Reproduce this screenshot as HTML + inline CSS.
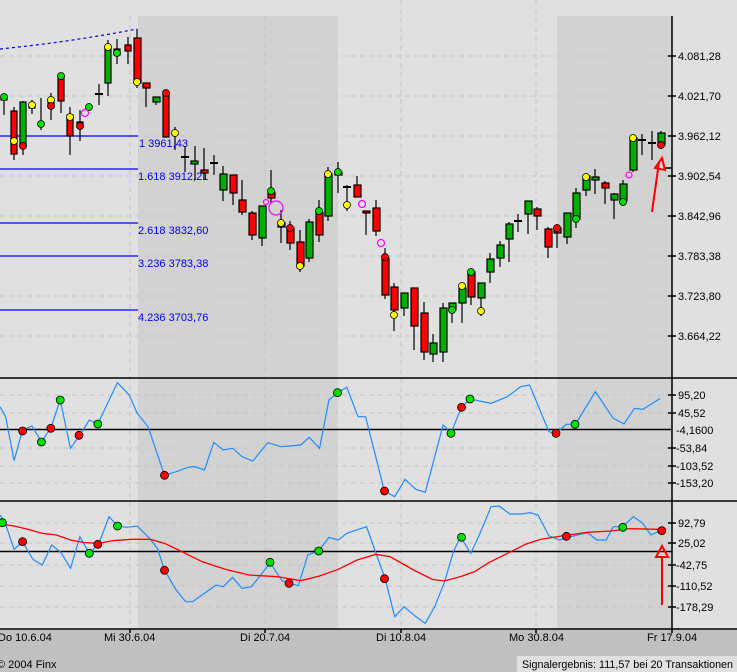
<!DOCTYPE html>
<html><head><meta charset="utf-8"><style>
html,body{margin:0;padding:0;background:#c0c0c0;}
svg{display:block;font-family:"Liberation Sans",sans-serif;}
</style></head><body>
<svg width="737" height="672" viewBox="0 0 737 672" xmlns="http://www.w3.org/2000/svg">
<rect x="0" y="0" width="737" height="629" fill="#e0e0e0"/>
<rect x="0" y="629" width="737" height="43" fill="#c0c0c0"/>
<g fill="#d2d2d2">
<rect x="138" y="16" width="200" height="613"/>
<rect x="557" y="16" width="115" height="613"/>
</g>
<g stroke="#c4c4c4" stroke-dasharray="5,4" stroke-width="1">
<line x1="0" y1="56" x2="672" y2="56"/><line x1="0" y1="96" x2="672" y2="96"/><line x1="0" y1="136" x2="672" y2="136"/><line x1="0" y1="176" x2="672" y2="176"/><line x1="0" y1="216" x2="672" y2="216"/><line x1="0" y1="256" x2="672" y2="256"/><line x1="0" y1="296" x2="672" y2="296"/><line x1="0" y1="336" x2="672" y2="336"/>
<line x1="0" y1="395" x2="672" y2="395"/><line x1="0" y1="413" x2="672" y2="413"/><line x1="0" y1="448" x2="672" y2="448"/><line x1="0" y1="466" x2="672" y2="466"/><line x1="0" y1="483" x2="672" y2="483"/>
<line x1="0" y1="523" x2="672" y2="523"/><line x1="0" y1="543" x2="672" y2="543"/><line x1="0" y1="565" x2="672" y2="565"/><line x1="0" y1="586" x2="672" y2="586"/><line x1="0" y1="607" x2="672" y2="607"/>
<line x1="130" y1="16" x2="130" y2="629"/><line x1="265" y1="16" x2="265" y2="629"/><line x1="401" y1="0" x2="401" y2="629"/><line x1="536" y1="0" x2="536" y2="629"/>
</g>
<g stroke="#000" stroke-width="1.5">
<line x1="0" y1="378" x2="737" y2="378"/><line x1="0" y1="501" x2="737" y2="501"/><line x1="0" y1="629" x2="737" y2="629"/>
<line x1="672" y1="16" x2="672" y2="633"/>
<line x1="0" y1="429.5" x2="672" y2="429.5"/><line x1="0" y1="551.5" x2="672" y2="551.5"/>
</g>
<g stroke="#000" stroke-width="1.5">
<line x1="668" y1="56" x2="676" y2="56"/><line x1="668" y1="96" x2="676" y2="96"/><line x1="668" y1="136" x2="676" y2="136"/><line x1="668" y1="176" x2="676" y2="176"/><line x1="665" y1="168" x2="672" y2="168"/><line x1="668" y1="216" x2="676" y2="216"/><line x1="668" y1="256" x2="676" y2="256"/><line x1="668" y1="296" x2="676" y2="296"/><line x1="668" y1="336" x2="676" y2="336"/>
<line x1="668" y1="395" x2="676" y2="395"/><line x1="668" y1="413" x2="676" y2="413"/><line x1="668" y1="448" x2="676" y2="448"/><line x1="668" y1="466" x2="676" y2="466"/><line x1="668" y1="483" x2="676" y2="483"/>
<line x1="668" y1="523" x2="676" y2="523"/><line x1="668" y1="543" x2="676" y2="543"/><line x1="668" y1="565" x2="676" y2="565"/><line x1="668" y1="586" x2="676" y2="586"/><line x1="668" y1="607" x2="676" y2="607"/>
<line x1="130" y1="629" x2="130" y2="633"/><line x1="265" y1="629" x2="265" y2="633"/><line x1="401" y1="629" x2="401" y2="633"/><line x1="536" y1="629" x2="536" y2="633"/>
</g>
<g font-size="11" fill="#000">
<text x="678" y="60">4.081,28</text><text x="678" y="100">4.021,70</text><text x="678" y="140">3.962,12</text><text x="678" y="180">3.902,54</text><text x="678" y="220">3.842,96</text><text x="678" y="260">3.783,38</text><text x="678" y="300">3.723,80</text><text x="678" y="340">3.664,22</text>
<text x="678" y="399">95,20</text><text x="678" y="417">45,52</text><text x="676" y="434">-4,1600</text><text x="676" y="452">-53,84</text><text x="676" y="470">-103,52</text><text x="676" y="487">-153,20</text>
<text x="678" y="527">92,79</text><text x="678" y="547">25,02</text><text x="676" y="569">-42,75</text><text x="676" y="590">-110,52</text><text x="676" y="611">-178,29</text>
<text x="-2" y="641">Do 10.6.04</text><text x="104" y="641">Mi 30.6.04</text><text x="240" y="641">Di 20.7.04</text><text x="376" y="641">Di 10.8.04</text><text x="509" y="641">Mo 30.8.04</text><text x="647" y="641">Fr 17.9.04</text>
<text x="-3" y="668">© 2004 Finx</text>
</g>
<rect x="517" y="656" width="220" height="16" fill="#e0e0e0"/>
<text x="522" y="668" font-size="11" fill="#000" textLength="211" lengthAdjust="spacingAndGlyphs">Signalergebnis: 111,57 bei 20 Transaktionen</text>
<g stroke="#0000ff" stroke-width="1.2">
<line x1="0" y1="136" x2="138" y2="136"/><line x1="0" y1="169" x2="138" y2="169"/><line x1="0" y1="223" x2="138" y2="223"/><line x1="0" y1="256" x2="138" y2="256"/><line x1="0" y1="310" x2="138" y2="310"/>
</g>
<path d="M0,49 Q70,42 137,29" stroke="#0000ff" stroke-dasharray="3,3" fill="none" stroke-width="1.2"/>
<g font-size="11" fill="#0000ff">
<text x="139" y="147">1  3961,43</text><text x="138" y="180">1.618  3912,21</text><text x="138" y="234">2.618  3832,60</text><text x="138" y="267">3.236  3783,38</text><text x="138" y="321">4.236  3703,76</text>
</g>
<g stroke="#000" stroke-width="1.2">
<line x1="4" y1="97" x2="4" y2="115"/><rect x="1" y="97" width="6" height="3" fill="#f00"/>
<line x1="14" y1="107" x2="14" y2="160"/><rect x="11" y="111" width="6" height="43" fill="#f00"/>
<line x1="23" y1="101" x2="23" y2="155"/><rect x="20" y="102" width="6" height="44" fill="#00b000"/>
<line x1="32" y1="100" x2="32" y2="114"/><rect x="29" y="105" width="6" height="3" fill="#f00"/>
<line x1="41" y1="98" x2="41" y2="130"/>
<line x1="51" y1="93" x2="51" y2="120"/><rect x="48" y="101" width="6" height="4" fill="#f00"/>
<line x1="61" y1="74" x2="61" y2="113"/><rect x="58" y="77" width="6" height="24" fill="#f00"/>
<line x1="70" y1="107" x2="70" y2="155"/><rect x="67" y="115" width="6" height="21" fill="#f00"/>
<line x1="80" y1="110" x2="80" y2="141"/><rect x="77" y="122" width="6" height="5" fill="#00b000"/>
<line x1="89" y1="104" x2="89" y2="110"/>
<line x1="99" y1="84" x2="99" y2="105"/><line x1="95" y1="94" x2="103" y2="94" stroke-width="2"/>
<line x1="108" y1="40" x2="108" y2="96"/><rect x="105" y="46" width="6" height="37" fill="#00b000"/>
<line x1="117" y1="39" x2="117" y2="64"/><rect x="114" y="49" width="6" height="6" fill="#00b000"/>
<line x1="128" y1="37" x2="128" y2="64"/><rect x="125" y="45" width="6" height="6" fill="#f00"/>
<line x1="137" y1="29" x2="137" y2="88"/><rect x="134" y="38" width="7" height="45" fill="#f00"/>
<line x1="146" y1="83" x2="146" y2="107"/><rect x="143" y="83" width="7" height="5" fill="#f00"/>
<line x1="156" y1="97" x2="156" y2="105"/><rect x="153" y="97" width="7" height="5" fill="#00b000"/>
<line x1="166" y1="90" x2="166" y2="137"/><rect x="163" y="95" width="6" height="42" fill="#f00"/>
<line x1="175" y1="127" x2="175" y2="150"/>
<line x1="185" y1="146" x2="185" y2="172"/><line x1="181" y1="157" x2="189" y2="157" stroke-width="2"/>
<line x1="195" y1="146" x2="195" y2="180"/><rect x="191" y="161" width="7" height="3" fill="#00b000"/>
<line x1="204" y1="148" x2="204" y2="180"/><rect x="201" y="170" width="7" height="3" fill="#f00"/>
<line x1="214" y1="155" x2="214" y2="175"/><line x1="210" y1="163" x2="218" y2="163" stroke-width="2"/>
<line x1="223" y1="166" x2="223" y2="201"/><rect x="220" y="174" width="7" height="16" fill="#00b000"/>
<line x1="233" y1="175" x2="233" y2="205"/><rect x="230" y="175" width="7" height="18" fill="#f00"/>
<line x1="242" y1="180" x2="242" y2="215"/><rect x="239" y="200" width="7" height="12" fill="#f00"/>
<line x1="252" y1="211" x2="252" y2="240"/><rect x="249" y="213" width="7" height="22" fill="#f00"/>
<line x1="262" y1="206" x2="262" y2="246"/><rect x="259" y="206" width="7" height="32" fill="#00b000"/>
<line x1="271" y1="170" x2="271" y2="203"/><rect x="268" y="192" width="7" height="6" fill="#f00"/>
<line x1="281" y1="210" x2="281" y2="243"/><rect x="278" y="223" width="7" height="4" fill="#f00"/>
<line x1="290" y1="221" x2="290" y2="250"/><rect x="287" y="228" width="7" height="15" fill="#f00"/>
<line x1="300" y1="230" x2="300" y2="272"/><rect x="297" y="242" width="7" height="24" fill="#f00"/>
<line x1="309" y1="219" x2="309" y2="262"/><rect x="306" y="222" width="7" height="36" fill="#00b000"/>
<line x1="319" y1="200" x2="319" y2="242"/><rect x="316" y="212" width="7" height="23" fill="#f00"/>
<line x1="328" y1="167" x2="328" y2="221"/><rect x="325" y="174" width="7" height="42" fill="#00b000"/>
<line x1="338" y1="162" x2="338" y2="193"/><rect x="335" y="172" width="7" height="3" fill="#00b000"/>
<line x1="347" y1="185" x2="347" y2="211"/><line x1="343" y1="187" x2="351" y2="187" stroke-width="2"/>
<line x1="357" y1="176" x2="357" y2="197"/><rect x="354" y="185" width="7" height="12" fill="#f00"/>
<line x1="366" y1="211" x2="366" y2="235"/><rect x="363" y="211" width="7" height="2" fill="#f00"/>
<line x1="376" y1="200" x2="376" y2="236"/><rect x="373" y="208" width="7" height="23" fill="#f00"/>
<line x1="385" y1="248" x2="385" y2="299"/><rect x="382" y="258" width="7" height="37" fill="#f00"/>
<line x1="394" y1="283" x2="394" y2="331"/><rect x="391" y="287" width="7" height="23" fill="#f00"/>
<line x1="404" y1="293" x2="404" y2="316"/><rect x="401" y="293" width="7" height="15" fill="#00b000"/>
<line x1="414" y1="288" x2="414" y2="350"/><rect x="411" y="288" width="7" height="38" fill="#f00"/>
<line x1="424" y1="302" x2="424" y2="360"/><rect x="421" y="313" width="7" height="39" fill="#f00"/>
<line x1="433" y1="334" x2="433" y2="362"/><rect x="430" y="343" width="7" height="11" fill="#00b000"/>
<line x1="443" y1="303" x2="443" y2="362"/><rect x="440" y="308" width="7" height="44" fill="#00b000"/>
<line x1="452" y1="303" x2="452" y2="323"/><rect x="449" y="303" width="7" height="7" fill="#00b000"/>
<line x1="462" y1="285" x2="462" y2="323"/><rect x="459" y="288" width="7" height="15" fill="#00b000"/>
<line x1="471" y1="272" x2="471" y2="305"/><rect x="468" y="272" width="7" height="25" fill="#f00"/>
<line x1="481" y1="283" x2="481" y2="316"/><rect x="478" y="283" width="7" height="15" fill="#00b000"/>
<line x1="490" y1="253" x2="490" y2="283"/><rect x="487" y="259" width="7" height="13" fill="#00b000"/>
<line x1="500" y1="241" x2="500" y2="267"/><rect x="497" y="245" width="7" height="13" fill="#00b000"/>
<line x1="509" y1="222" x2="509" y2="262"/><rect x="506" y="224" width="7" height="15" fill="#00b000"/>
<line x1="518" y1="214" x2="518" y2="232"/><line x1="514" y1="221" x2="522" y2="221" stroke-width="2"/>
<line x1="528" y1="201" x2="528" y2="234"/><rect x="525" y="201" width="7" height="13" fill="#00b000"/>
<line x1="537" y1="207" x2="537" y2="230"/><rect x="534" y="209" width="7" height="7" fill="#f00"/>
<line x1="548" y1="227" x2="548" y2="258"/><rect x="545" y="229" width="7" height="18" fill="#f00"/>
<line x1="557" y1="224" x2="557" y2="248"/><rect x="554" y="228" width="7" height="5" fill="#f00"/>
<line x1="567" y1="213" x2="567" y2="244"/><rect x="564" y="213" width="7" height="24" fill="#00b000"/>
<line x1="576" y1="188" x2="576" y2="228"/><rect x="573" y="193" width="7" height="26" fill="#00b000"/>
<line x1="586" y1="176" x2="586" y2="196"/><rect x="583" y="176" width="7" height="14" fill="#00b000"/>
<line x1="595" y1="169" x2="595" y2="194"/><rect x="592" y="177" width="7" height="3" fill="#00b000"/>
<line x1="605" y1="181" x2="605" y2="204"/><rect x="602" y="183" width="7" height="5" fill="#f00"/>
<line x1="614" y1="193" x2="614" y2="219"/><rect x="611" y="194" width="7" height="6" fill="#00b000"/>
<line x1="623" y1="180" x2="623" y2="202"/><rect x="620" y="184" width="7" height="17" fill="#00b000"/>
<line x1="633" y1="136" x2="633" y2="172"/><rect x="630" y="138" width="7" height="32" fill="#00b000"/>
<line x1="642" y1="134" x2="642" y2="155"/><line x1="638" y1="140" x2="646" y2="140" stroke-width="2"/>
<line x1="652" y1="131" x2="652" y2="160"/><line x1="648" y1="143" x2="656" y2="143" stroke-width="2"/>
<line x1="661" y1="131" x2="661" y2="149"/><rect x="658" y="133" width="7" height="12" fill="#00b000"/>
</g>
<g stroke="#000" stroke-width="0.8">
<circle cx="4" cy="97" r="3.5" fill="#00e000"/><circle cx="14" cy="141" r="3.5" fill="#ff0"/><circle cx="23" cy="146" r="3.5" fill="#f00"/><circle cx="32" cy="105" r="3.5" fill="#ff0"/><circle cx="41" cy="124" r="3.5" fill="#00e000"/><circle cx="51" cy="100" r="3.5" fill="#ff0"/><circle cx="51" cy="106" r="3.5" fill="#f00"/><circle cx="61" cy="76" r="3.5" fill="#00e000"/><circle cx="70" cy="117" r="3.5" fill="#ff0"/><circle cx="80" cy="126" r="3.5" fill="#f00"/><circle cx="89" cy="107" r="3.5" fill="#00e000"/><circle cx="108" cy="47" r="3.5" fill="#ff0"/><circle cx="117" cy="53" r="3.5" fill="#00e000"/><circle cx="137" cy="82" r="3.5" fill="#ff0"/><circle cx="166" cy="93" r="3.5" fill="#f00"/><circle cx="175" cy="133" r="3.5" fill="#ff0"/><circle cx="271" cy="191" r="3.5" fill="#00e000"/><circle cx="281" cy="223" r="3.5" fill="#ff0"/><circle cx="290" cy="228" r="3.5" fill="#f00"/><circle cx="300" cy="266" r="3.5" fill="#ff0"/><circle cx="319" cy="211" r="3.5" fill="#00e000"/><circle cx="328" cy="174" r="3.5" fill="#ff0"/><circle cx="338" cy="172" r="3.5" fill="#00e000"/><circle cx="347" cy="205" r="3.5" fill="#ff0"/><circle cx="385" cy="257" r="3.5" fill="#f00"/><circle cx="394" cy="315" r="3.5" fill="#ff0"/><circle cx="452" cy="310" r="3.5" fill="#00e000"/><circle cx="462" cy="286" r="3.5" fill="#ff0"/><circle cx="471" cy="272" r="3.5" fill="#00e000"/><circle cx="481" cy="311" r="3.5" fill="#ff0"/><circle cx="557" cy="228" r="3.5" fill="#f00"/><circle cx="576" cy="219" r="3.5" fill="#00e000"/><circle cx="586" cy="177" r="3.5" fill="#ff0"/><circle cx="623" cy="202" r="3.5" fill="#00e000"/><circle cx="633" cy="138" r="3.5" fill="#ff0"/><circle cx="661" cy="145" r="3.5" fill="#f00"/>
</g>
<g stroke="#ff00ff" fill="none" stroke-width="1.2">
<circle cx="85" cy="113" r="3.5"/><circle cx="266" cy="202" r="2.5"/><circle cx="276" cy="208" r="7"/><circle cx="362" cy="204" r="3.5"/><circle cx="381" cy="243" r="3.5"/><circle cx="629" cy="175" r="3"/>
</g>
<path d="M652,212 L659,162" stroke="#f00" stroke-width="2" fill="none"/>
<path d="M655,168 L662,158 L665,170 Z" stroke="#f00" stroke-width="2" fill="none"/>
<g transform="translate(0,370) scale(0.4699,0.33333)">
<polyline vector-effect="non-scaling-stroke" fill="none" stroke="#1e8cff" stroke-width="1.2" points="0,110 12,140 30,272 48,180 68,168 88,215 108,175 128,90 150,235 170,195 190,150 208,162 250,38 275,75 292,130 315,170 350,316 375,305 400,292 415,290 435,300 455,217 475,240 495,235 515,260 538,273 570,218 598,230 640,225 658,202 680,235 700,90 718,68 738,52 762,140 778,140 818,363 840,380 862,328 885,358 905,367 943,165 960,188 982,112 1000,87 1045,100 1080,80 1108,50 1127,45 1168,185 1183,190 1205,163 1225,162 1267,65 1305,145 1328,162 1350,115 1368,118 1405,85"/>
<polyline vector-effect="non-scaling-stroke" fill="none" stroke="#1e8cff" stroke-width="1.2" points="0,435 10,455 30,538 48,515 70,568 90,585 110,525 130,548 150,595 170,500 190,550 210,522 232,440 250,468 270,472 292,468 318,505 335,535 350,600 375,660 395,695 410,695 440,665 460,645 475,650 495,622 515,655 535,650 555,615 575,578 600,632 615,640 635,647 655,555 678,543 700,502 720,510 738,490 780,470 820,628 840,740 860,710 885,740 905,760 925,710 945,640 965,545 980,500 1002,550 1020,495 1045,410 1062,408 1085,432 1110,432 1128,428 1145,435 1168,497 1190,510 1215,500 1250,488 1270,510 1290,510 1305,470 1325,470 1348,440 1368,460 1385,495 1405,482"/>
<polyline vector-effect="non-scaling-stroke" fill="none" stroke="#f00" stroke-width="1.3" points="0,462 30,468 60,478 90,490 120,495 150,510 180,518 210,520 240,512 280,508 320,508 350,520 380,540 430,575 480,598 530,615 590,620 640,632 680,618 720,598 760,570 800,553 830,560 880,600 920,628 945,633 980,620 1010,605 1040,578 1080,550 1120,522 1150,508 1200,497 1250,487 1300,483 1340,476 1400,478"/>
</g>
<g stroke="#000" stroke-width="0.8">
<circle cx="22.6" cy="431" r="4" fill="#f00"/><circle cx="50.8" cy="428.3" r="4" fill="#f00"/><circle cx="79" cy="435.3" r="4" fill="#f00"/><circle cx="164.5" cy="475.3" r="4" fill="#f00"/><circle cx="384.5" cy="491" r="4" fill="#f00"/><circle cx="461.5" cy="407.3" r="4" fill="#f00"/><circle cx="556" cy="433.3" r="4" fill="#f00"/>
<circle cx="41.4" cy="442" r="4" fill="#00e000"/><circle cx="60.2" cy="400" r="4" fill="#00e000"/><circle cx="97.8" cy="424" r="4" fill="#00e000"/><circle cx="337.5" cy="392.7" r="4" fill="#00e000"/><circle cx="451" cy="433.3" r="4" fill="#00e000"/><circle cx="470" cy="399" r="4" fill="#00e000"/><circle cx="575" cy="424.3" r="4" fill="#00e000"/>
<circle cx="2.4" cy="522.7" r="4" fill="#00e000"/><circle cx="89.3" cy="553.3" r="4" fill="#00e000"/><circle cx="117.5" cy="526" r="4" fill="#00e000"/><circle cx="270" cy="562.3" r="4" fill="#00e000"/><circle cx="318.7" cy="551" r="4" fill="#00e000"/><circle cx="461.5" cy="537.3" r="4" fill="#00e000"/><circle cx="622.8" cy="527.3" r="4" fill="#00e000"/>
<circle cx="22.6" cy="541.7" r="4" fill="#f00"/><circle cx="97.8" cy="544.3" r="4" fill="#f00"/><circle cx="164.5" cy="570.3" r="4" fill="#f00"/><circle cx="289" cy="583.3" r="4" fill="#f00"/><circle cx="384.5" cy="578.7" r="4" fill="#f00"/><circle cx="566.4" cy="536.3" r="4" fill="#f00"/><circle cx="661.8" cy="530.7" r="4" fill="#f00"/>
</g>
<line x1="662" y1="557" x2="662" y2="605" stroke="#f00" stroke-width="2"/>
<path d="M656,557 L662,546 L668,557 Z" stroke="#f00" stroke-width="2" fill="none"/>
</svg>
</body></html>
